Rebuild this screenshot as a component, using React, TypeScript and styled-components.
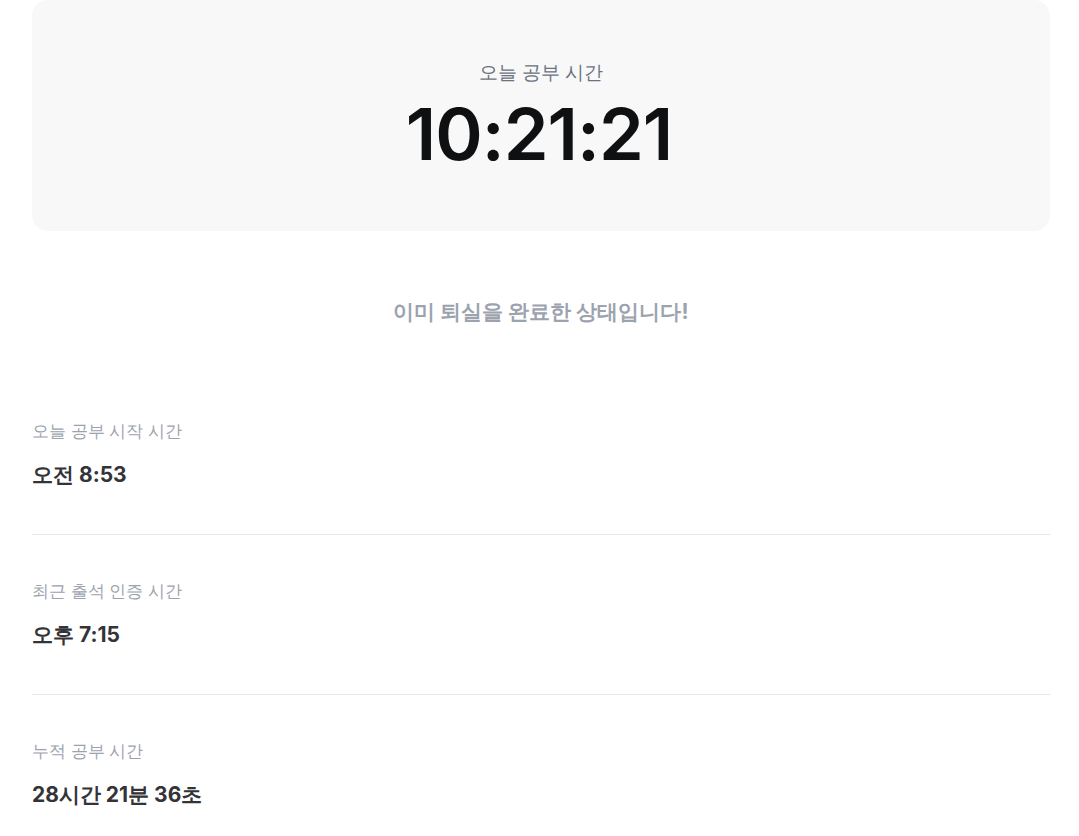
import React from "react";
import styled, { createGlobalStyle } from "styled-components";

const Global = createGlobalStyle`
  html, body { margin: 0; padding: 0; background: #ffffff; }
  body { font-family: Inter, sans-serif; }
`;

const Page = styled.main`
  padding: 0 29px 0 32px;
`;

const TimerCard = styled.section`
  background: #f8f8f8;
  border-radius: 16px;
  padding: 60px 0 54px;
  display: flex;
  flex-direction: column;
  align-items: center;
`;

const TimerLabel = styled.div`
  font-size: 19px;
  line-height: 26px;
  color: #6b7280;
  margin-bottom: 4px;
`;

const TimerValue = styled.div`
  font-size: 72px;
  line-height: 87px;
  font-weight: 600;
  color: #0f1012;
  letter-spacing: -1px;
  transform: translateX(-2px);
`;

const Status = styled.p`
  margin: 66px 0 48px;
  text-align: center;
  font-size: 21px;
  line-height: 30px;
  font-weight: 700;
  color: #9ca3af;
`;

const InfoList = styled.div`
  display: flex;
  flex-direction: column;
`;

const InfoRow = styled.div<{ $last?: boolean }>`
  display: flex;
  flex-direction: column;
  gap: 17px;
  padding: 44px 0;
  border-bottom: ${(p) => (p.$last ? "none" : "1px solid #e5e7eb")};
`;

const InfoLabel = styled.div`
  font-size: 17px;
  line-height: 24px;
  color: #9ca3af;
  font-weight: 500;
`;

const InfoValue = styled.div`
  font-size: 21px;
  line-height: 30px;
  font-weight: 700;
  color: #333338;
`;

const rows = [
  { label: "오늘 공부 시작 시간", value: "오전 8:53" },
  { label: "최근 출석 인증 시간", value: "오후 7:15" },
  { label: "누적 공부 시간", value: "28시간 21분 36초" },
];

export default function App() {
  return (
    <>
      <Global />
      <Page>
        <TimerCard>
          <TimerLabel>오늘 공부 시간</TimerLabel>
          <TimerValue>10:21:21</TimerValue>
        </TimerCard>
        <Status>이미 퇴실을 완료한 상태입니다!</Status>
        <InfoList>
          {rows.map((r, i) => (
            <InfoRow key={r.label} $last={i === rows.length - 1}>
              <InfoLabel>{r.label}</InfoLabel>
              <InfoValue>{r.value}</InfoValue>
            </InfoRow>
          ))}
        </InfoList>
      </Page>
    </>
  );
}
